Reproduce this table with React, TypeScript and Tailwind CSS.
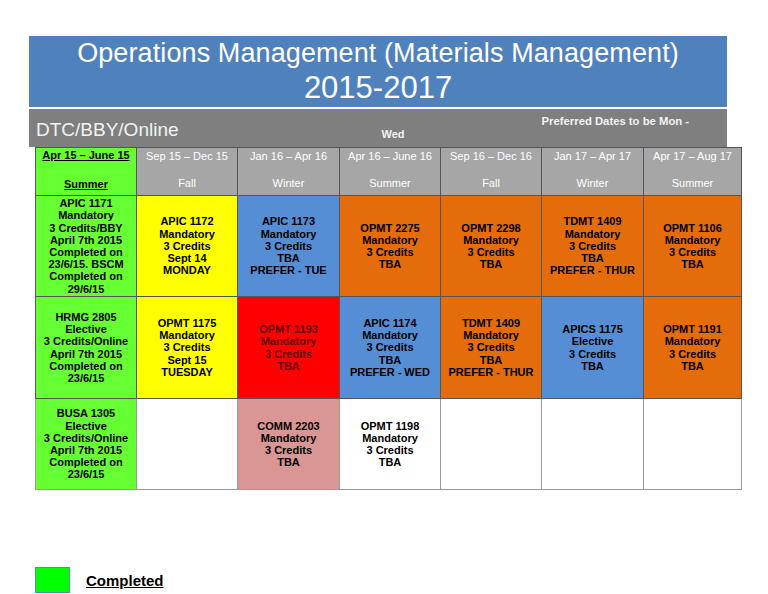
const font = { fontFamily: '"Liberation Sans", Arial, sans-serif' };

type Cell = { bg: string; lines: string[]; text?: string };

const headers = [
  { dates: "Sep 15 – Dec 15", season: "Fall" },
  { dates: "Jan 16 – Apr 16", season: "Winter" },
  { dates: "Apr 16 – June 16", season: "Summer" },
  { dates: "Sep 16 – Dec 16", season: "Fall" },
  { dates: "Jan 17 – Apr 17", season: "Winter" },
  { dates: "Apr 17 – Aug 17", season: "Summer" },
];

const rows: { h: string; cells: Cell[] }[] = [
  {
    h: "h-[101px]",
    cells: [
      {
        bg: "bg-[#66ff33]",
        lines: ["APIC 1171", "Mandatory", "3 Credits/BBY", "April 7th 2015", "Completed on", "23/6/15. BSCM", "Completed on", "29/6/15"],
      },
      { bg: "bg-[#ffff00]", lines: ["APIC 1172", "Mandatory", "3 Credits", "Sept 14", "MONDAY"] },
      { bg: "bg-[#558ed5]", lines: ["APIC 1173", "Mandatory", "3 Credits", "TBA", "PREFER - TUE"] },
      { bg: "bg-[#e46c0a]", lines: ["OPMT 2275", "Mandatory", "3 Credits", "TBA"] },
      { bg: "bg-[#e46c0a]", lines: ["OPMT 2298", "Mandatory", "3 Credits", "TBA"] },
      { bg: "bg-[#e46c0a]", lines: ["TDMT 1409", "Mandatory", "3 Credits", "TBA", "PREFER - THUR"] },
      { bg: "bg-[#e46c0a]", lines: ["OPMT 1106", "Mandatory", "3 Credits", "TBA"] },
    ],
  },
  {
    h: "h-[102px]",
    cells: [
      { bg: "bg-[#66ff33]", lines: ["HRMG 2805", "Elective", "3 Credits/Online", "April 7th 2015", "Completed on", "23/6/15"] },
      { bg: "bg-[#ffff00]", lines: ["OPMT 1175", "Mandatory", "3 Credits", "Sept 15", "TUESDAY"] },
      { bg: "bg-[#ff0000]", lines: ["OPMT 1193", "Mandatory", "3 Credits", "TBA"], text: "text-[#5c0000]" },
      { bg: "bg-[#558ed5]", lines: ["APIC 1174", "Mandatory", "3 Credits", "TBA", "PREFER - WED"] },
      { bg: "bg-[#e46c0a]", lines: ["TDMT 1409", "Mandatory", "3 Credits", "TBA", "PREFER - THUR"] },
      { bg: "bg-[#558ed5]", lines: ["APICS 1175", "Elective", "3 Credits", "TBA"] },
      { bg: "bg-[#e46c0a]", lines: ["OPMT 1191", "Mandatory", "3 Credits", "TBA"] },
    ],
  },
  {
    h: "h-[91px]",
    cells: [
      { bg: "bg-[#66ff33]", lines: ["BUSA 1305", "Elective", "3 Credits/Online", "April 7th 2015", "Completed on", "23/6/15"] },
      { bg: "bg-white", lines: [] },
      { bg: "bg-[#d99694]", lines: ["COMM 2203", "Mandatory", "3 Credits", "TBA"] },
      { bg: "bg-white", lines: ["OPMT 1198", "Mandatory", "3 Credits", "TBA"] },
      { bg: "bg-white", lines: [] },
      { bg: "bg-white", lines: [] },
      { bg: "bg-white", lines: [] },
    ],
  },
];

const cols = "grid grid-cols-[102px_101px_102px_101px_101px_102px_98px]";

export default function App() {
  return (
    <div className="w-[768px] h-[594px] bg-white overflow-hidden pt-[36px]" style={font}>
      {/* Title */}
      <div className="ml-[29px] w-[698px] h-[71px] bg-[#4f81bd] flex flex-col items-center justify-center text-white leading-none">
        <div className="text-[27px] tracking-[0.1px]">Operations Management (Materials Management)</div>
        <div className="text-[31px] mt-[5px]">2015-2017</div>
      </div>

      {/* Campus band */}
      <div className="ml-[29px] mt-[2px] w-[698px] h-[38px] bg-[#7f7f7f] flex text-[#f2f2f2]">
        <div className="pl-[7px] self-center text-[19px] leading-none mt-[2px]">DTC/BBY/Online</div>
        <div className="ml-[203px] self-end mb-[7px] text-[11px] font-bold leading-none">Wed</div>
        <div className="ml-[137px] mt-[7px] text-[11.3px] font-bold leading-none">Preferred Dates to be Mon -</div>
      </div>

      {/* Schedule */}
      <div className="ml-[35px] w-[707px]">
        <div className={`${cols} h-[49px]`}>
          <div className="bg-[#66ff33] border border-[#555] flex flex-col items-center justify-between pt-[2px] pb-[5px] text-[11px] font-bold underline leading-none text-black">
            <span>Apr 15 – June 15</span>
            <span>Summer</span>
          </div>
          {headers.map((h) => (
            <div
              key={h.dates}
              className="bg-[#a6a6a6] border-t border-r border-b border-[#555] flex flex-col items-center justify-between pt-[3px] pb-[6px] text-[11px] leading-none text-white"
            >
              <span>{h.dates}</span>
              <span>{h.season}</span>
            </div>
          ))}
        </div>
        {rows.map((r, ri) => (
          <div key={ri} className={`${cols} ${r.h}`}>
            {r.cells.map((c, ci) => (
              <div
                key={ci}
                className={`${c.bg} ${ci === 0 ? "border-l" : ""} border-r border-b ${
                  ri === 2 ? "border-[#9a9a9a]" : "border-[#555]"
                } flex flex-col items-center justify-center text-center text-[11px] font-bold leading-[12.2px] ${
                  c.text ?? "text-black"
                }`}
              >
                {c.lines.map((l, li) => (
                  <span key={li}>{l}</span>
                ))}
              </div>
            ))}
          </div>
        ))}
      </div>

      {/* Legend */}
      <div className="ml-[35px] mt-[77px] flex items-center gap-[16px]">
        <div className="w-[35px] h-[26px] bg-[#00ff00] border border-[#4a9a9a]" />
        <span className="text-[15px] font-bold underline text-black leading-none">Completed</span>
      </div>
    </div>
  );
}
